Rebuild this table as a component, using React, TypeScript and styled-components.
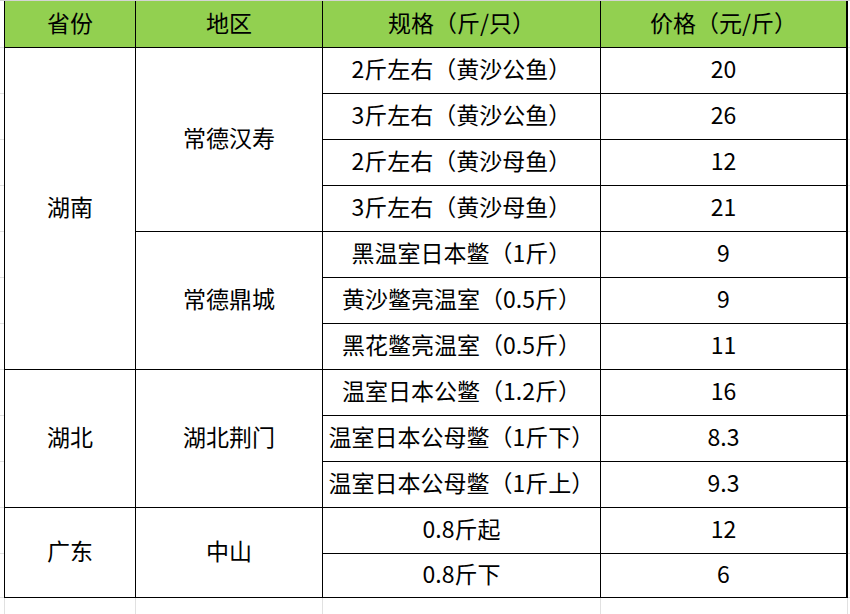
import { Fragment } from "react";
import { createGlobalStyle, styled } from "styled-components";

type Item = [string, string];
type Region = { name: string; items: Item[] };
type Province = { name: string; regions: Region[] };

const data: Province[] = [
    {
        name: "湖南",
        regions: [
            {
                name: "常德汉寿",
                items: [
                    ["2斤左右（黄沙公鱼）", "20"],
                    ["3斤左右（黄沙公鱼）", "26"],
                    ["2斤左右（黄沙母鱼）", "12"],
                    ["3斤左右（黄沙母鱼）", "21"],
                ],
            },
            {
                name: "常德鼎城",
                items: [
                    ["黑温室日本鳖（1斤）", "9"],
                    ["黄沙鳖亮温室（0.5斤）", "9"],
                    ["黑花鳖亮温室（0.5斤）", "11"],
                ],
            },
        ],
    },
    {
        name: "湖北",
        regions: [
            {
                name: "湖北荆门",
                items: [
                    ["温室日本公鳖（1.2斤）", "16"],
                    ["温室日本公母鳖（1斤下）", "8.3"],
                    ["温室日本公母鳖（1斤上）", "9.3"],
                ],
            },
        ],
    },
    {
        name: "广东",
        regions: [
            {
                name: "中山",
                items: [
                    ["0.8斤起", "12"],
                    ["0.8斤下", "6"],
                ],
            },
        ],
    },
];

const headers = ["省份", "地区", "规格（斤/只）", "价格（元/斤）"];

// grid line 1 = top edge, 2 = header, 3.. = body rows
const FIRST_BODY_ROW = 3;
const BODY_ROWS = 12;

export default function App() {
    const body: JSX.Element[] = [];
    let row = FIRST_BODY_ROW;

    data.forEach((p) => {
        const pSpan = p.regions.reduce((n, r) => n + r.items.length, 0);
        body.push(
            <Cell key={`p-${p.name}`} $col={2} $row={row} $span={pSpan} $first>
                {p.name}
            </Cell>
        );
        p.regions.forEach((r) => {
            body.push(
                <Cell key={`r-${r.name}`} $col={3} $row={row} $span={r.items.length}>
                    {r.name}
                </Cell>
            );
            r.items.forEach(([spec, price]) => {
                body.push(
                    <Fragment key={`i-${row}`}>
                        <Cell $col={4} $row={row} $span={1}>
                            {spec}
                        </Cell>
                        <Cell $col={5} $row={row} $span={1} $last>
                            {price}
                        </Cell>
                    </Fragment>
                );
                row++;
            });
        });
    });

    const gutterRows = Array.from({ length: BODY_ROWS + 1 }, (_, i) => i + 2);
    const ghostRow = FIRST_BODY_ROW + BODY_ROWS;

    return (
        <>
            <GlobalStyle />
            <Sheet>
                <TopEdge />
                {gutterRows.map((r) => (
                    <Fragment key={`g-${r}`}>
                        <Gutter $col={1} $row={r} />
                        <Gutter $col={6} $row={r} />
                    </Fragment>
                ))}
                {headers.map((h, i) => (
                    <HeaderCell key={h} $col={i + 2} $first={i === 0} $last={i === headers.length - 1}>
                        {h}
                    </HeaderCell>
                ))}
                {body}
                {[2, 3, 4, 5].map((c) => (
                    <GhostCell key={`x-${c}`} $col={c} $row={ghostRow} $first={c === 2} />
                ))}
            </Sheet>
        </>
    );
}

const GlobalStyle = createGlobalStyle`
    html, body {
        margin: 0;
        padding: 0;
        background: #ffffff;
    }
    body {
        font-family: "Noto Sans CJK SC", "Noto Sans", sans-serif;
        color: #000000;
    }
`;

const Sheet = styled.div`
    display: grid;
    width: 850px;
    grid-template-columns: 4px 132px 187px 278px 247px 2px;
    grid-template-rows: 1px 47px repeat(11, 46px) 44px 16px;
`;

const TopEdge = styled.div`
    grid-column: 1 / -1;
    grid-row: 1;
    background: #d4d4d4;
`;

const Gutter = styled.div<{ $col: number; $row: number }>`
    grid-column: ${(p) => p.$col};
    grid-row: ${(p) => p.$row};
    border-bottom: 1px solid #e1e1e1;
`;

const HeaderCell = styled.div<{ $col: number; $first?: boolean; $last?: boolean }>`
    grid-column: ${(p) => p.$col};
    grid-row: 2;
    display: flex;
    align-items: center;
    justify-content: center;
    padding-bottom: 5px;
    background: #92d050;
    font-size: 23px;
    white-space: nowrap;
    border-bottom: 1px solid #000;
    border-right: ${(p) => (p.$last ? "2px" : "1px")} solid #000;
    border-left: ${(p) => (p.$first ? "1px solid #000" : "none")};
`;

const Cell = styled.div<{ $col: number; $row: number; $span: number; $first?: boolean; $last?: boolean }>`
    grid-column: ${(p) => p.$col};
    grid-row: ${(p) => p.$row} / span ${(p) => p.$span};
    display: flex;
    align-items: center;
    justify-content: center;
    padding-bottom: 5px;
    font-size: 23px;
    white-space: nowrap;
    border-bottom: 1px solid #000;
    border-right: ${(p) => (p.$last ? "2px" : "1px")} solid #000;
    border-left: ${(p) => (p.$first ? "1px solid #000" : "none")};
`;

const GhostCell = styled.div<{ $col: number; $row: number; $first?: boolean }>`
    grid-column: ${(p) => p.$col};
    grid-row: ${(p) => p.$row};
    border-right: 1px solid #e1e1e1;
    border-left: ${(p) => (p.$first ? "1px solid #e1e1e1" : "none")};
`;
